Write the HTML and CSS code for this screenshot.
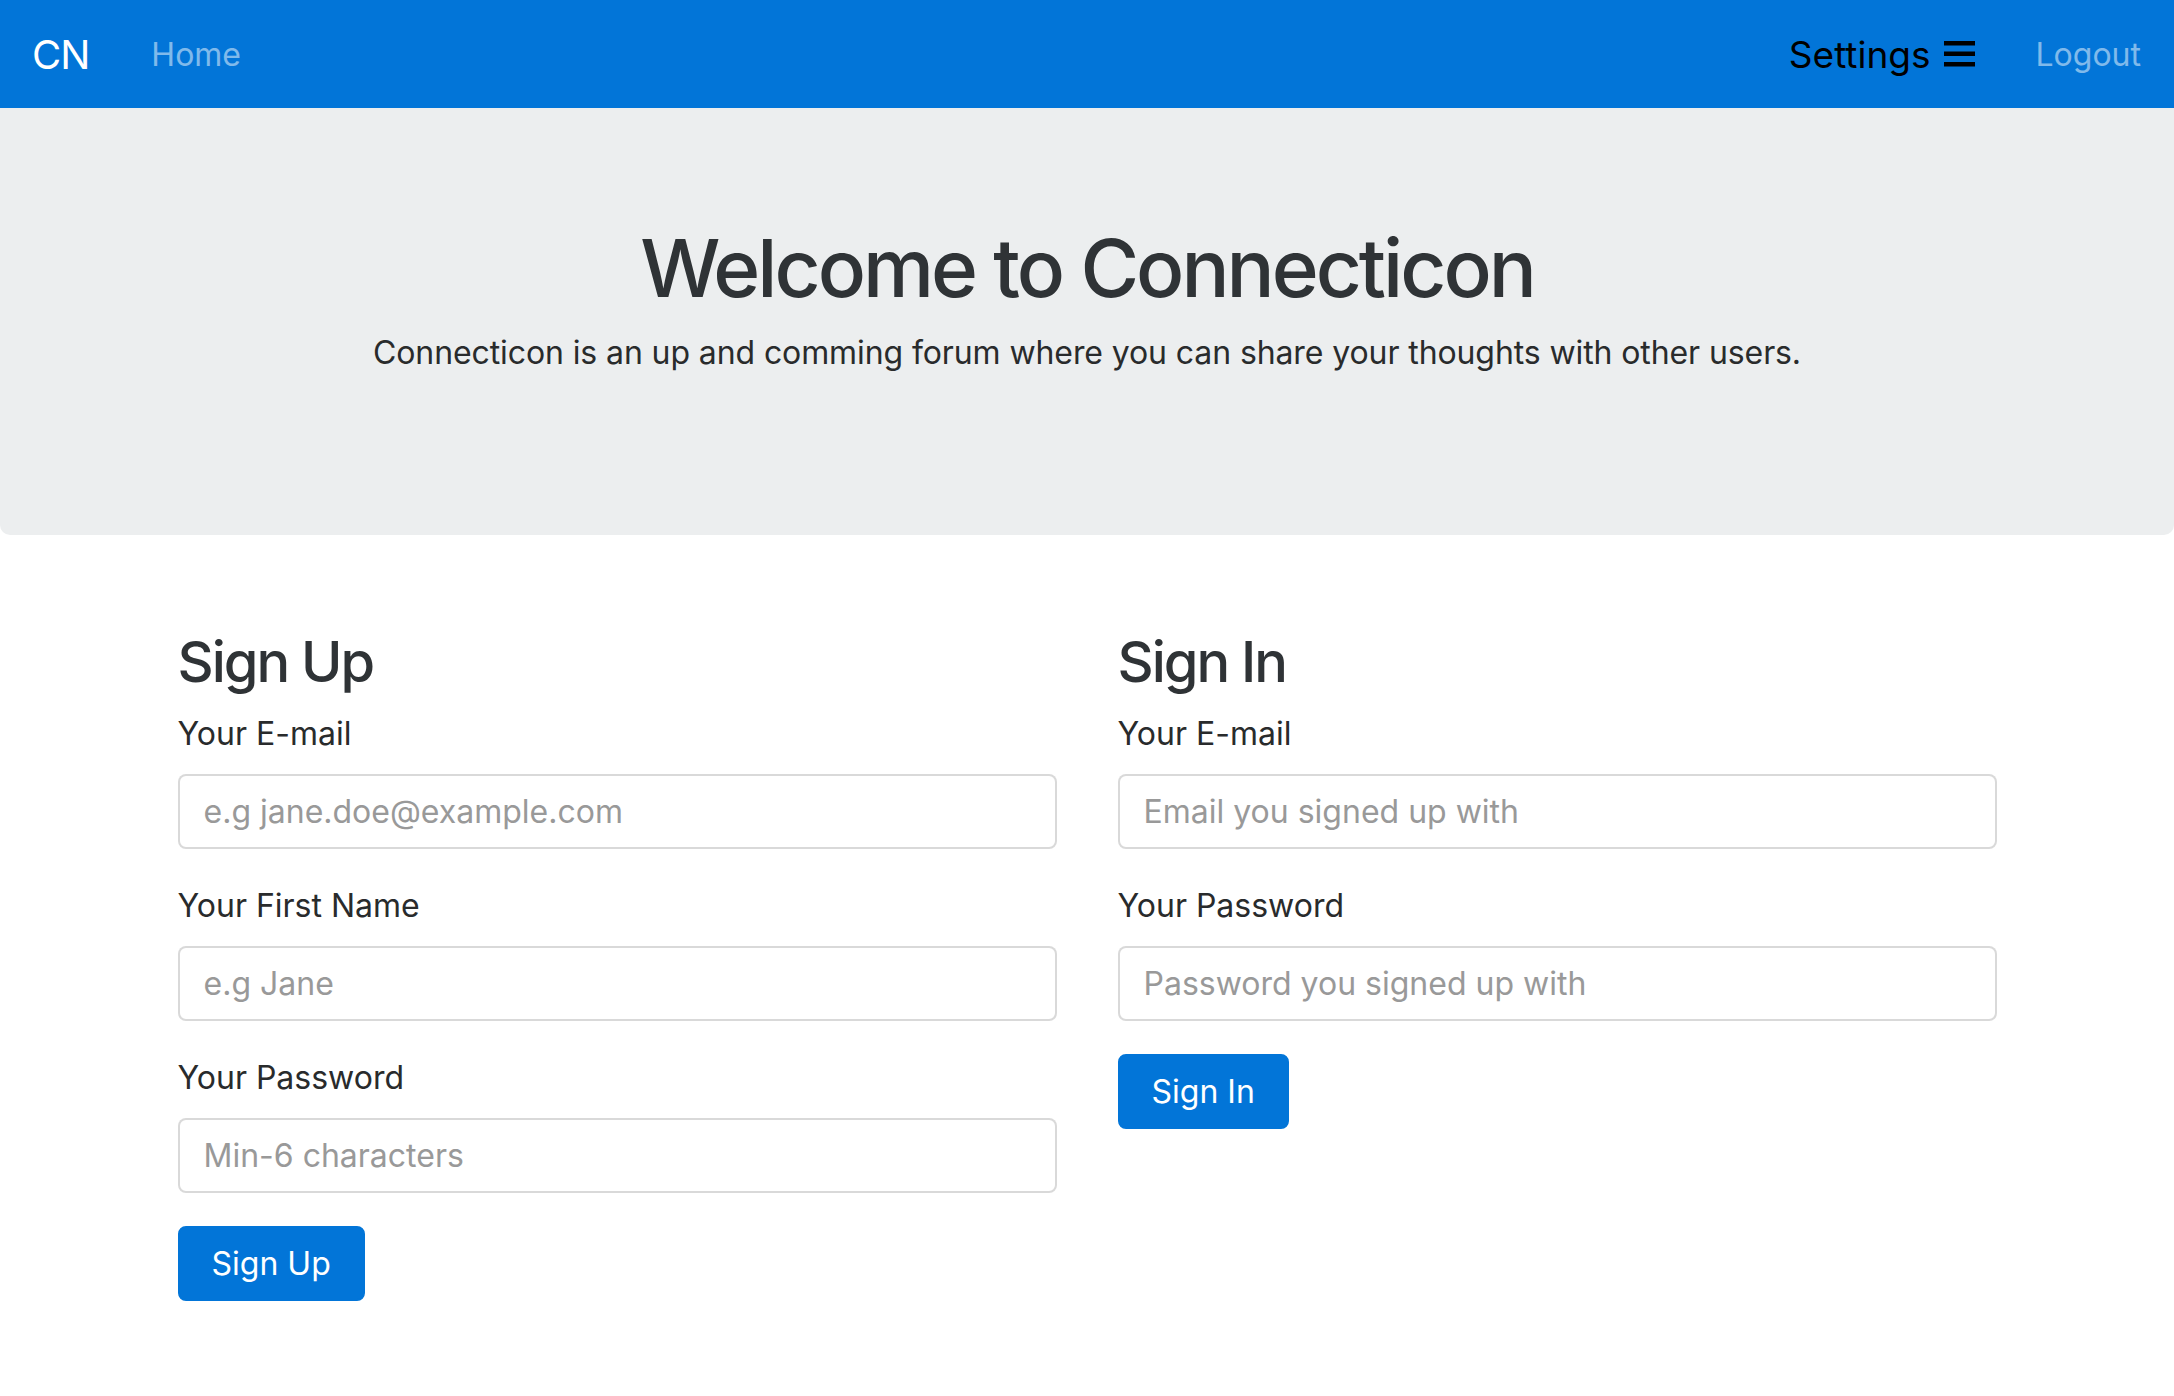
FILE: index.html
```html
<!DOCTYPE html>
<html lang="en">
<head>
<meta charset="utf-8">
<title>Connecticon</title>
<link rel="stylesheet" href="styles.css">
</head>
<body>
<nav class="navbar">
  <a class="brand" href="#">CN</a>
  <a class="nav-link" href="#">Home</a>
  <div class="nav-right">
    <a class="settings" href="#">Settings
      <svg class="bars" width="31" height="26" viewBox="0 0 31 26" aria-hidden="true">
        <rect x="0" y="0" width="31" height="4.5" fill="#000"/>
        <rect x="0" y="10.5" width="31" height="4.5" fill="#000"/>
        <rect x="0" y="21" width="31" height="4.5" fill="#000"/>
      </svg>
    </a>
    <a class="nav-link logout" href="#">Logout</a>
  </div>
</nav>

<header class="jumbotron">
  <h1 class="jumbo-title">Welcome to Connecticon</h1>
  <p class="jumbo-text">Connecticon is an up and comming forum where you can share your thoughts with other users.</p>
</header>

<main class="container">
  <section class="col">
    <h3 class="col-title">Sign Up</h3>
    <form class="form">
      <div class="form-group">
        <label class="label">Your E-mail</label>
        <input class="input" type="email" placeholder="e.g jane.doe@example.com">
      </div>
      <div class="form-group">
        <label class="label">Your First Name</label>
        <input class="input" type="text" placeholder="e.g Jane">
      </div>
      <div class="form-group">
        <label class="label">Your Password</label>
        <input class="input" type="password" placeholder="Min-6 characters">
      </div>
      <button class="btn" type="button">Sign Up</button>
    </form>
  </section>
  <section class="col">
    <h3 class="col-title">Sign In</h3>
    <form class="form">
      <div class="form-group">
        <label class="label">Your E-mail</label>
        <input class="input" type="email" placeholder="Email you signed up with">
      </div>
      <div class="form-group">
        <label class="label">Your Password</label>
        <input class="input" type="password" placeholder="Password you signed up with">
      </div>
      <button class="btn" type="button">Sign In</button>
    </form>
  </section>
</main>
</body>
</html>
```
FILE: styles.css
```css
* { box-sizing: border-box; }
html, body {
  margin: 0;
  padding: 0;
  background: #fff;
}
body {
  font-family: "Inter", "Noto Sans", "Liberation Sans", sans-serif;
  font-size: 32px;
  line-height: 1.5;
  color: #292b2c;
}
a { text-decoration: none; }

.navbar {
  height: 108px;
  background: #0275d8;
  display: flex;
  align-items: center;
  padding: 2px 33px 0 32px;
}
.brand {
  color: #fff;
  font-size: 40px;
  line-height: 1;
  margin-right: 62px;
  letter-spacing: -1px;
}
.nav-link {
  color: rgba(255, 255, 255, 0.5);
  line-height: 1;
}
.nav-right {
  margin-left: auto;
  display: flex;
  align-items: center;
}
.settings {
  color: #000;
  display: flex;
  align-items: center;
  font-size: 37px;
  line-height: 1;
  margin-top: -2px;
}
.bars {
  margin-left: 13px;
  display: block;
}
.logout {
  margin-left: 61px;
}

.jumbotron {
  background: #eceeef;
  border-radius: 0 0 10px 10px;
  text-align: center;
  padding: 112px 32px 158px;
}
.jumbo-title {
  font-size: 80px;
  font-weight: 500;
  line-height: 1.2;
  letter-spacing: -3px;
  margin: 0 0 13px;
  color: #2f3336;
}
.jumbo-text {
  margin: 0;
  line-height: 48px;
  letter-spacing: -0.1px;
}

.container {
  width: 1819px;
  margin: 0 auto;
  padding-top: 94px;
  display: grid;
  grid-template-columns: 1fr 1fr;
  column-gap: 61px;
  align-items: start;
}
.col-title {
  font-size: 56px;
  font-weight: 500;
  line-height: 1.2;
  letter-spacing: -2px;
  margin: 0 0 14px;
  color: #2f3336;
}
.form { margin: 0; }
.form-group { margin-bottom: 33px; }
.label {
  display: block;
  line-height: 48px;
  margin-bottom: 16px;
}
.input {
  display: block;
  width: 100%;
  height: 75px;
  padding: 0 24px;
  font-family: inherit;
  font-size: 32px;
  color: #464a4c;
  background: #fff;
  border: 2px solid rgba(0, 0, 0, 0.15);
  border-radius: 8px;
  outline: none;
}
.input::placeholder { color: #999; opacity: 1; }

.btn {
  display: inline-block;
  height: 75px;
  padding: 0 32px;
  font-family: inherit;
  font-size: 32px;
  line-height: 1;
  color: #fff;
  background: #0275d8;
  border: 2px solid #0275d8;
  border-radius: 8px;
  cursor: pointer;
}
```
